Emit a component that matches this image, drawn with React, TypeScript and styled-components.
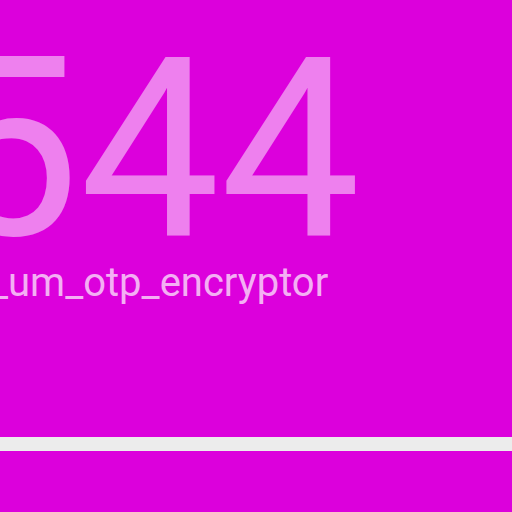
import styled, { createGlobalStyle } from 'styled-components';

const GlobalStyle = createGlobalStyle`
  html, body {
    margin: 0;
    padding: 0;
    background-color: #dc00dc;
  }
`;

const Screen = styled.div`
  display: flex;
  flex-direction: column;
  width: 512px;
  height: 512px;
  overflow: hidden;
  background-color: #dc00dc;
  font-family: Roboto, 'Noto Sans', sans-serif;
`;

const Code = styled.div`
  margin-top: 50px;
  margin-left: -61px;
  font-size: 250px;
  line-height: 200px;
  color: rgba(255, 255, 255, 0.5);
  white-space: nowrap;
`;

const Label = styled.div`
  margin-top: 10px;
  margin-left: -10px;
  font-size: 40px;
  line-height: 46px;
  color: rgba(255, 255, 255, 0.7);
  white-space: nowrap;
`;

const Progress = styled.div`
  margin-top: auto;
  margin-bottom: 61px;
  height: 14px;
  background-color: #ececec;
`;

const App = () => {
  return (
    <Screen>
      <GlobalStyle />
      <Code>544</Code>
      <Label>_um_otp_encryptor</Label>
      <Progress />
    </Screen>
  );
};

export default App;
